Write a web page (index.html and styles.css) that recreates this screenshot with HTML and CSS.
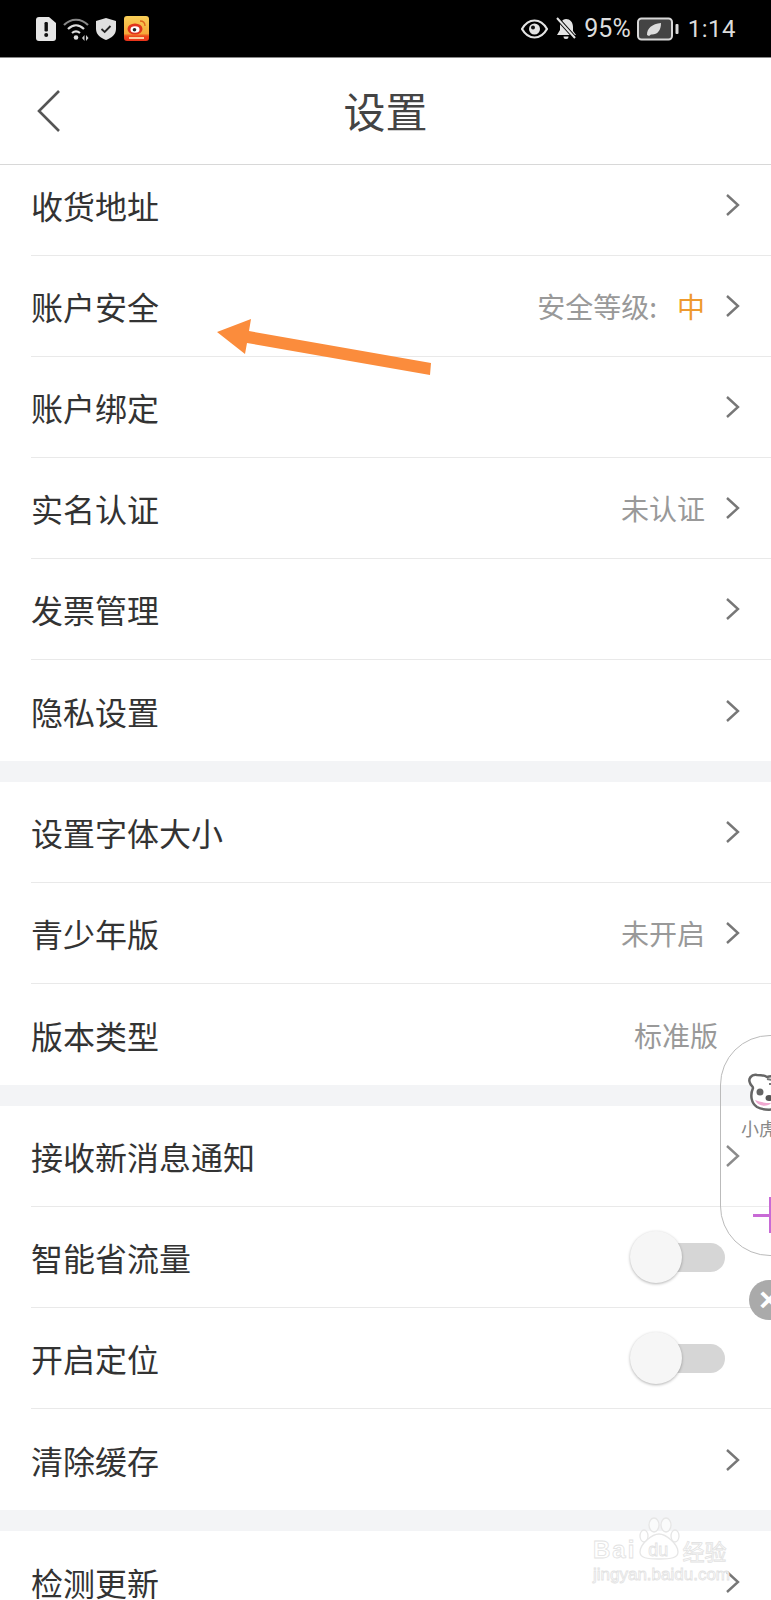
FILE: index.html
```html
<!DOCTYPE html>
<html lang="zh-CN">
<head>
    <meta charset="UTF-8">
    <meta name="viewport" content="width=device-width, initial-scale=1.0">
    <title>设置</title>
    <link rel="stylesheet" href="styles.css">
</head>
<body>
    <div class="page">
        <!-- status bar -->
        <div class="status-bar">
            <div class="status-left">
                <svg class="ic-alert" viewBox="0 0 20 24"><path d="M3 0h10l7 6v15a3 3 0 0 1-3 3H3a3 3 0 0 1-3-3V3a3 3 0 0 1 3-3z" fill="#e6e6e6"/><rect x="8.500" y="5" width="3.400" height="9.500" rx="1.200" fill="#111"/><circle cx="10.200" cy="18" r="2" fill="#111"/></svg>
                <svg class="ic-wifi" viewBox="0 0 27 24"><g fill="none" stroke="#ddd" stroke-width="2.200"><path d="M1 8c7-7 17-7 24 0" stroke="#888"/><path d="M5 12c5-5 11-5 16 0"/><path d="M9 16c3-2.500 5-2.500 8 0"/></g><circle cx="13" cy="20.500" r="2.300" fill="#ddd"/><path d="M19 21l2.500-3v6zM23 18l2.500 3-2.500 3z" fill="#ccc"/></svg>
                <svg class="ic-shield" viewBox="0 0 20 22"><path d="M10 0l10 3v8c0 6-5 9-10 11C5 20 0 17 0 11V3z" fill="#e0e0e0"/><path d="M5.500 11l3.200 3 5.800-6" fill="none" stroke="#222" stroke-width="1.800"/></svg>
                <svg class="ic-weibo" viewBox="0 0 25 25">
                    <defs><linearGradient id="wb" x1="0" y1="0" x2="0" y2="1"><stop offset="0" stop-color="#f9cf58"/><stop offset=".7" stop-color="#f5a93a"/><stop offset=".8" stop-color="#ee4a1c"/><stop offset="1" stop-color="#e8321a"/></linearGradient></defs>
                    <rect width="25" height="25" rx="3" fill="url(#wb)"/>
                    <ellipse cx="11" cy="13" rx="7.500" ry="5.500" fill="#e0331c"/>
                    <ellipse cx="11" cy="13.500" rx="4.500" ry="3.300" fill="#fff"/>
                    <circle cx="10.500" cy="13.700" r="1.800" fill="#222"/>
                    <path d="M16 5c3 0 5 2 5 5" fill="none" stroke="#e0631c" stroke-width="1.300"/>
                    <rect x="5" y="21" width="15" height="2" fill="#fbd0a0"/>
                </svg>
            </div>
            <div class="status-right">
                <svg class="ic-eye" viewBox="0 0 27 20"><path d="M1 10C5 3 9 1.500 13.500 1.500S22 3 26 10c-4 7-8 8.500-12.500 8.500S5 17 1 10z" fill="none" stroke="#e4e4e4" stroke-width="2.200"/><circle cx="13.500" cy="10" r="5.500" fill="#e4e4e4"/><circle cx="12" cy="8.500" r="2" fill="#111"/></svg>
                <svg class="ic-bell" viewBox="0 0 23 23"><path d="M11 2c4 0 7 3 7 8v4l3 4H2l3-5V9c0-4 3-7 6-7z" fill="#e4e4e4"/><path d="M8.500 19.500h5a2.500 2.500 0 0 1-5 0z" fill="#e4e4e4"/><path d="M2 1l18 20" stroke="#000" stroke-width="4"/><path d="M2 1l18 20" stroke="#e4e4e4" stroke-width="2"/></svg>
                <span class="status-text pct">95%</span>
                <svg class="ic-battery" viewBox="0 0 42 24"><rect x="1" y="1.500" width="34" height="21" rx="3.500" fill="#444" stroke="#d8d8d8" stroke-width="2"/><path d="M10 18c0-7 5-11 14-12 0 8-4 12-10 11.500l-2 1.500z" fill="#ddd"/><rect x="38.500" y="7" width="3" height="10" rx="1" fill="#d8d8d8"/></svg>
                <span class="status-text">1:14</span>
            </div>
        </div>

        <!-- title bar -->
        <header class="title-bar">
            <svg class="back" viewBox="0 0 24 44"><polyline points="22,2 2,22 22,42" fill="none" stroke="#555" stroke-width="2.600"/></svg>
            <h1>设置</h1>
        </header>

        <section class="group first">
            <div class="row"><span class="name">收货地址</span><svg class="chev" viewBox="0 0 14 22"><polyline points="1,1 12,11 1,21"/></svg></div>
            <div class="row"><span class="name">账户安全</span><span class="value">安全等级:</span><span class="level">中</span><svg class="chev" viewBox="0 0 14 22"><polyline points="1,1 12,11 1,21"/></svg></div>
            <div class="row"><span class="name">账户绑定</span><svg class="chev" viewBox="0 0 14 22"><polyline points="1,1 12,11 1,21"/></svg></div>
            <div class="row"><span class="name">实名认证</span><span class="value">未认证</span><svg class="chev" viewBox="0 0 14 22"><polyline points="1,1 12,11 1,21"/></svg></div>
            <div class="row"><span class="name">发票管理</span><svg class="chev" viewBox="0 0 14 22"><polyline points="1,1 12,11 1,21"/></svg></div>
            <div class="row last"><span class="name">隐私设置</span><svg class="chev" viewBox="0 0 14 22"><polyline points="1,1 12,11 1,21"/></svg></div>
        </section>

        <section class="group">
            <div class="row"><span class="name">设置字体大小</span><svg class="chev" viewBox="0 0 14 22"><polyline points="1,1 12,11 1,21"/></svg></div>
            <div class="row"><span class="name">青少年版</span><span class="value">未开启</span><svg class="chev" viewBox="0 0 14 22"><polyline points="1,1 12,11 1,21"/></svg></div>
            <div class="row last no-chev"><span class="name">版本类型</span><span class="value">标准版</span></div>
        </section>

        <section class="group">
            <div class="row"><span class="name">接收新消息通知</span><svg class="chev" viewBox="0 0 14 22"><polyline points="1,1 12,11 1,21"/></svg></div>
            <div class="row"><span class="name">智能省流量</span><div class="switch"><div class="knob"></div></div></div>
            <div class="row"><span class="name">开启定位</span><div class="switch"><div class="knob"></div></div></div>
            <div class="row last"><span class="name">清除缓存</span><svg class="chev" viewBox="0 0 14 22"><polyline points="1,1 12,11 1,21"/></svg></div>
        </section>

        <section class="group">
            <div class="row last"><span class="name">检测更新</span><svg class="chev" viewBox="0 0 14 22"><polyline points="1,1 12,11 1,21"/></svg></div>
        </section>

        <!-- annotation arrow drawn over the screenshot -->
        <svg class="arrow" viewBox="0 0 771 1600"><polygon points="217,332 251,319 249,331 431,363 430,375 247,343 245,354" fill="#fb8c3c"/></svg>

        <!-- floating helper -->
        <div class="float-box">
            <svg class="bear" viewBox="0 0 46 38"><path d="M9 2C3 1 0 6 2 10c1 3 3 3 3 5-3 7-2 15 4 19 7 4 25 4 31-4 4-6 4-14 1-20-4-6-13-8-22-6-3-2-6-2-10-2z" fill="#fff" stroke="#666" stroke-width="2.500"/><path d="M19 6l5 1M21 11l5 0" stroke="#777" stroke-width="2" fill="none"/><circle cx="12" cy="19" r="3.500" fill="#666"/><ellipse cx="21" cy="25" rx="3.500" ry="3" fill="#555"/><path d="M7 27c5 2 10 3 16 3-3 4-13 4-16-3z" fill="#f0a8d0"/></svg>
            <span class="float-label">小虎</span>
            <div class="plus"></div>
        </div>
        <div class="float-close">×</div>

        <!-- watermark -->
        <div class="watermark">
            <svg class="paw" viewBox="0 0 42 43"><g fill="#fff" fill-opacity=".6" stroke="#e6e6e6" stroke-width="1.300"><ellipse cx="16" cy="8" rx="5" ry="7"/><ellipse cx="28" cy="8" rx="5" ry="7"/><ellipse cx="6" cy="19" rx="4" ry="6"/><ellipse cx="37" cy="19" rx="4" ry="6"/><path d="M21 17c7 0 19 10 19 18 0 6-7 7-19 7S2 41 2 35c0-8 12-18 19-18z"/></g></svg>
            <div class="wm-line"><span class="wm-bai">Bai</span><span class="wm-du">du</span><span class="wm-cn">经验</span></div>
            <div class="wm-url">jingyan.baidu.com</div>
        </div>
    </div>
</body>
</html>
```

FILE: styles.css
```css
* {
    box-sizing: border-box;
}
html, body {
    margin: 0;
    padding: 0;
    background: #fff;
}
body {
    font-family: "Noto Sans CJK SC", "Noto Sans", sans-serif;
    color: #333;
}
.page {
    position: relative;
    width: 771px;
    height: 1600px;
    overflow: hidden;
    background: #fff;
}

/* status bar */
.status-bar {
    display: flex;
    justify-content: space-between;
    align-items: center;
    height: 58px;
    padding: 0 35px 0 36px;
    background: #000;
    border-bottom: 1px solid #888;
}
.status-left, .status-right {
    display: flex;
    align-items: center;
}
.status-text {
    font-family: Roboto, sans-serif;
    font-size: 24px;
    color: #dcdcdc;
    letter-spacing: 0.5px;
}
.ic-alert { width: 20px; height: 24px; }
.ic-wifi { width: 27px; height: 24px; margin-left: 7px; }
.ic-shield { width: 20px; height: 22px; margin-left: 6px; }
.ic-weibo { width: 25px; height: 25px; margin-left: 8px; }
.ic-eye { width: 27px; height: 20px; }
.ic-bell { width: 23px; height: 23px; margin-left: 7px; }
.pct { margin-left: 6px; font-size: 25px; letter-spacing: 0; }
.ic-battery { width: 42px; height: 24px; margin: 0 9px 0 6px; }

/* title bar */
.title-bar {
    position: relative;
    display: flex;
    align-items: center;
    justify-content: center;
    height: 107px;
    padding-bottom: 4px;
    border-bottom: 1px solid #d8d8d8;
}
.title-bar h1 {
    margin: 0;
    font-size: 42px;
    font-weight: 400;
    color: #444;
}
.back {
    position: absolute;
    left: 37px;
    top: 31px;
    width: 24px;
    height: 44px;
}

/* list */
.group {
    border-bottom: 21px solid #f3f4f6;
}
.row {
    display: flex;
    align-items: center;
    height: 101px;
    margin-left: 31px;
    padding-right: 31px;
    border-bottom: 1px solid #e9e9e9;
}
.first .row:first-child {
    height: 91px;
    padding-bottom: 10px;
}
.row.last {
    border-bottom: none;
}
.row.no-chev {
    padding-right: 53px;
}
.name {
    flex: 1;
    font-size: 32px;
}
.value {
    font-size: 28px;
    color: #999;
}
.level {
    margin-left: 20px;
    font-size: 28px;
    color: #ee9a2e;
}
.chev {
    width: 14px;
    height: 22px;
    margin-left: 21px;
}
.chev polyline {
    fill: none;
    stroke: #777;
    stroke-width: 2.4;
}

/* toggle */
.switch {
    position: relative;
    width: 80px;
    height: 29px;
    margin-right: 15px;
    border-radius: 15px;
    background: #d6d6d6;
}
.knob {
    position: absolute;
    left: -15px;
    top: -12px;
    width: 52px;
    height: 52px;
    border-radius: 50%;
    background: #f6f6f6;
    box-shadow: 0 1px 3px rgba(0, 0, 0, 0.3);
}

/* overlays */
.arrow {
    position: absolute;
    left: 0;
    top: 0;
    width: 771px;
    height: 1600px;
}
.float-box {
    position: absolute;
    left: 720px;
    top: 1035px;
    width: 110px;
    height: 221px;
    border: 1px solid #bbb;
    border-radius: 50px;
    background: rgba(255, 255, 255, 0.15);
}
.bear {
    position: absolute;
    left: 27px;
    top: 37px;
    width: 46px;
    height: 38px;
}
.float-label {
    position: absolute;
    left: 20px;
    top: 79px;
    font-size: 18px;
    color: #888;
    white-space: nowrap;
}
.plus {
    position: absolute;
    left: 29px;
    top: 161px;
    width: 40px;
    height: 36px;
    background:
        linear-gradient(#c86ad6, #c86ad6) center / 3px 36px no-repeat,
        linear-gradient(#c86ad6, #c86ad6) center / 34px 3px no-repeat;
}
.float-close {
    position: absolute;
    left: 749px;
    top: 1280px;
    width: 40px;
    height: 40px;
    border-radius: 50%;
    background: #aaa;
    color: #fff;
    font-size: 34px;
    font-weight: 700;
    line-height: 38px;
    text-align: center;
    font-family: "Liberation Sans", sans-serif;
}
.watermark {
    position: absolute;
    left: 593px;
    top: 1517px;
    width: 140px;
    color: #fff;
    -webkit-text-stroke: 0.8px #e2e2e2;
}
.paw {
    position: absolute;
    left: 45px;
    top: 0;
    width: 42px;
    height: 43px;
}
.wm-line {
    position: relative;
    display: flex;
    align-items: center;
    margin-top: 23px;
    height: 20px;
    font-family: "Liberation Sans", sans-serif;
}
.wm-bai {
    font-size: 24px;
    font-weight: 700;
    letter-spacing: 2px;
}
.wm-du {
    margin-left: 12px;
    font-size: 18px;
}
.wm-cn {
    margin-left: 14px;
    font-size: 22px;
    font-family: "Noto Sans CJK SC", sans-serif;
}
.wm-url {
    position: relative;
    margin-top: 5px;
    font-family: "Liberation Sans", sans-serif;
    font-size: 17px;
    white-space: nowrap;
}
```
